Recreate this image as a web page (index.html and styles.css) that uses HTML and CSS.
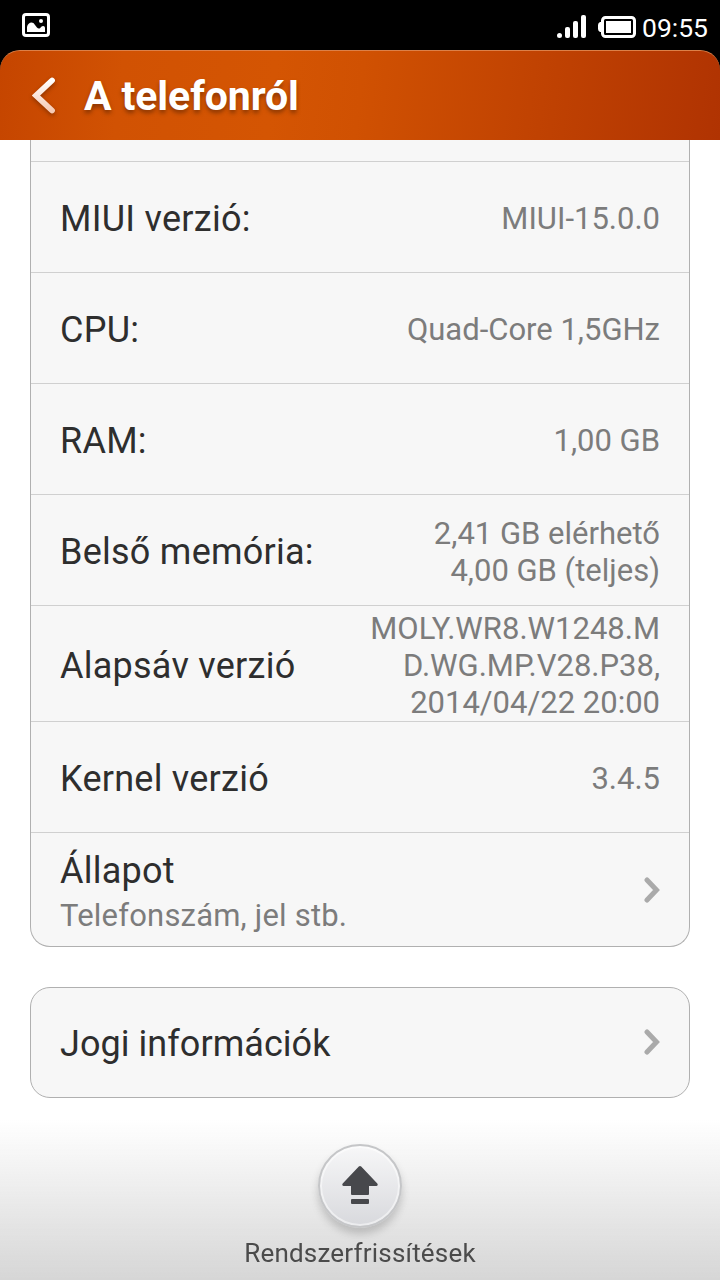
FILE: index.html
```html
<!DOCTYPE html>
<html lang="hu">
<head>
    <meta charset="UTF-8">
    <meta name="viewport" content="width=device-width, initial-scale=1.0">
    <title>A telefonról</title>
    <link rel="stylesheet" href="styles.css">
</head>
<body>

<div class="status-bar">
    <svg class="picture-icon" width="28" height="24" viewBox="0 0 28 24">
        <rect x="1.5" y="1.5" width="25" height="21" rx="2.5" fill="none" stroke="#fff" stroke-width="3"/>
        <path d="M5 19V14C6 9 11 8 13 12C15 15 17 17 19 14C21 12 23 13 23 15V19Z" fill="#fff"/>
        <circle cx="19" cy="8" r="2" fill="#fff"/>
    </svg>
    <svg class="signal-icon" width="30" height="24" viewBox="0 0 30 24" fill="#fff">
        <circle cx="2.5" cy="20.5" r="2.5"/>
        <rect x="8" y="12" width="5" height="11" rx="2"/>
        <rect x="16" y="6" width="5" height="17" rx="2"/>
        <rect x="24" y="0" width="5" height="23" rx="2"/>
    </svg>
    <svg class="battery-icon" width="38" height="22" viewBox="0 0 38 22">
        <path d="M2 6H4V16H2Q0 15 0 13V9Q0 7 2 6Z" fill="#fff"/>
        <rect x="4.5" y="1.5" width="32" height="19" rx="3" fill="none" stroke="#fff" stroke-width="3"/>
        <rect x="8" y="5" width="25" height="12" fill="#fff"/>
    </svg>
    <span class="clock">09:55</span>
</div>

<div class="header">
    <svg class="back-icon" width="24" height="37" viewBox="0 0 24 37">
        <defs>
            <linearGradient id="back-fill" x1="0" y1="0" x2="0" y2="1">
                <stop offset="0" stop-color="#fff"/>
                <stop offset="1" stop-color="#f6cbb6"/>
            </linearGradient>
        </defs>
        <path d="M20 3.5L4 18.5L20 33.5" fill="none" stroke="url(#back-fill)" stroke-width="5.8" stroke-linecap="round"/>
    </svg>
    <h1>A telefonról</h1>
</div>

<div class="content">
    <div class="card card-top">
        <div class="row row-cut"></div>
        <div class="row"><span class="label">MIUI verzió:</span><span class="value">MIUI-15.0.0</span></div>
        <div class="row"><span class="label">CPU:</span><span class="value">Quad-Core 1,5GHz</span></div>
        <div class="row"><span class="label">RAM:</span><span class="value">1,00 GB</span></div>
        <div class="row"><span class="label">Belső memória:</span><span class="value value-multi">2,41 GB elérhető<br>4,00 GB (teljes)</span></div>
        <div class="row row-baseband"><span class="label">Alapsáv verzió</span><span class="value value-multi">MOLY.WR8.W1248.M<br>D.WG.MP.V28.P38,<br>2014/04/22 20:00</span></div>
        <div class="row"><span class="label">Kernel verzió</span><span class="value">3.4.5</span></div>
        <div class="row row-state">
            <div>
                <div class="label">Állapot</div>
                <div class="summary">Telefonszám, jel stb.</div>
            </div>
            <svg class="arrow" width="16" height="26" viewBox="0 0 16 26"><path d="M3 3L12.5 13L3 23" fill="none" stroke="#aaa" stroke-width="5" stroke-linecap="round"/></svg>
        </div>
    </div>

    <div class="card">
        <div class="row row-legal">
            <span class="label">Jogi információk</span>
            <svg class="arrow" width="16" height="26" viewBox="0 0 16 26"><path d="M3 3L12.5 13L3 23" fill="none" stroke="#aaa" stroke-width="5" stroke-linecap="round"/></svg>
        </div>
    </div>
</div>

<div class="bottom-bar">
    <div class="update-button">
        <svg width="36" height="38" viewBox="0 0 36 38" fill="#47484c">
            <path d="M16.8 0.6Q18 -0.4 19.2 0.6L35.3 17.5Q36.5 19.6 34.5 20H27V28Q27 29 26 29H10Q9 29 9 28V20H1.5Q-0.5 19.6 0.7 17.5Z"/>
            <rect x="9" y="33" width="18" height="5" rx="1"/>
        </svg>
    </div>
    <span class="update-label">Rendszerfrissítések</span>
</div>

</body>
</html>
```
FILE: styles.css
```css
* { box-sizing: border-box; }
body { margin: 0; width: 720px; height: 1280px; overflow: hidden; background: #fff; font-family: Roboto, sans-serif; display: flex; flex-direction: column; }

.status-bar { height: 50px; flex: none; background: #000; display: flex; align-items: flex-start; padding: 0 12px 0 22px; }
.picture-icon { margin-top: 13px; }
.signal-icon { margin: 15px 11px 0 auto; }
.battery-icon { margin-top: 16px; }
.clock { margin: 12px 0 0 6px; color: #fff; font-size: 26.5px; line-height: 32px; white-space: nowrap; }

.header { height: 90px; flex: none; background: #000; display: flex; align-items: center; padding-left: 32px; position: relative; z-index: 0; }
.header::before { content: ""; position: absolute; inset: 0; z-index: -1; border-radius: 20px 20px 0 0; border-top: 1px solid #dc8048; background: linear-gradient(97deg, #c54500 0%, #d15203 17%, #d45503 38%, #d05102 50%, #b03302 100%); }
.header h1 { margin: 0 0 0 28px; padding-top: 2px; color: #fff; font-size: 41px; line-height: 48px; letter-spacing: -0.1px; font-weight: bold; text-shadow: 0 3px 4px rgba(0, 0, 0, 0.35); white-space: nowrap; }
.back-icon { filter: drop-shadow(0 2px 2px rgba(0, 0, 0, 0.3)); }

.content { flex: none; padding: 0 30px; }
.card { border: 1px solid #b0b0b0; border-radius: 20px; background: #f7f7f7; margin-bottom: 40px; }
.card-top { border-top: none; border-radius: 0 0 20px 20px; }
.row { height: 111px; display: flex; align-items: center; justify-content: space-between; padding: 0 29px; border-bottom: 1px solid #d0d0d0; white-space: nowrap; }
.row-cut { height: 22px; }
.row-baseband { height: 116px; }
.row-state { height: 113px; border-bottom: none; }
.row-legal { height: 109px; border-bottom: none; }
.label { padding-top: 4px; color: #2e2e2e; font-size: 36px; line-height: 44px; letter-spacing: 0.25px; }
.value { padding-top: 2px; color: #7c7c7c; font-size: 31px; line-height: 37px; text-align: right; }
.value-multi { padding-top: 4px; }
.summary { color: #7c7c7c; font-size: 31px; line-height: 37px; letter-spacing: 0.2px; margin-top: 4px; }
.row-legal .label { padding-top: 2px; letter-spacing: 0.05px; }
.row-legal .arrow { margin-bottom: 2px; }

.bottom-bar { position: fixed; left: 0; right: 0; bottom: 0; height: 160px; padding-top: 24px; display: flex; flex-direction: column; align-items: center; background: linear-gradient(rgba(214, 214, 214, 0), #d6d6d6); }
.update-button { width: 84px; height: 84px; flex: none; border-radius: 50%; border: 2px solid #c5c6c8; background: linear-gradient(#f7f7f8, #d8d9dd); box-shadow: 0 6px 8px rgba(0, 0, 0, 0.18), inset 0 0 0 2px rgba(255, 255, 255, 0.5); display: flex; align-items: center; justify-content: center; }
.update-button svg { margin-bottom: 2px; }
.update-label { margin-top: 9px; color: #4b4b4b; font-size: 26px; line-height: 32px; letter-spacing: 0.2px; white-space: nowrap; }
```
